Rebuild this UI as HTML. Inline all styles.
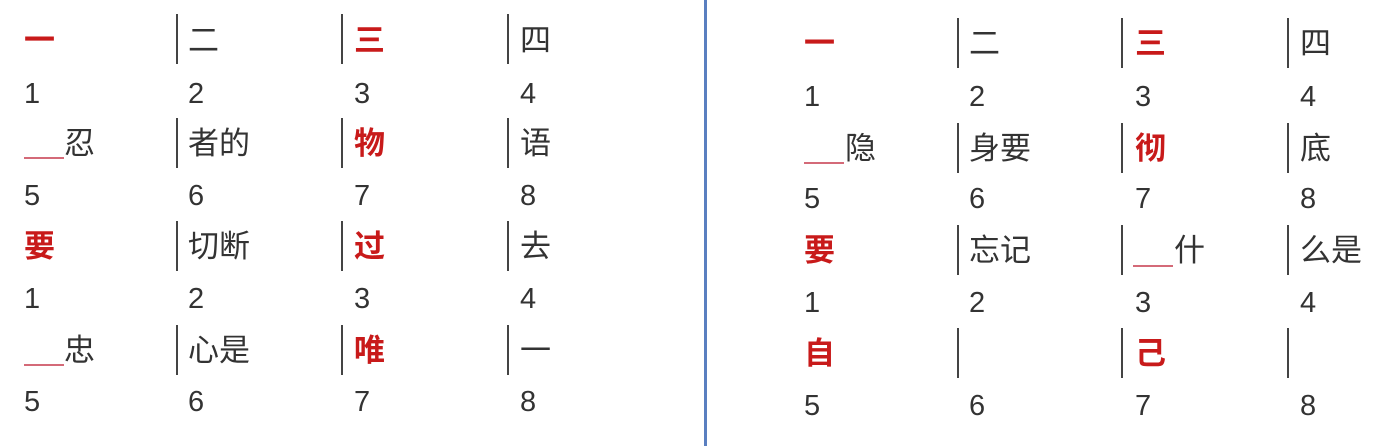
<!DOCTYPE html>
<html><head><meta charset="utf-8"><style>
html,body{margin:0;padding:0;background:#fff;width:1389px;height:446px;overflow:hidden;position:relative}
.c{position:absolute;font-family:"Liberation Sans","Noto Sans CJK SC",sans-serif;font-size:31px;line-height:30px;color:#333;white-space:nowrap}
.r{color:#c81a1a}
.b{font-weight:bold}
.n{position:absolute;font-family:"Liberation Sans",sans-serif;font-size:29px;line-height:30px;color:#333}
.bar{position:absolute;width:2px;height:50px;background:#444}
.u{position:absolute;height:2px;width:40px;background:#d46a78}
#div{position:absolute;left:704px;top:0;width:3px;height:446px;background:#5a7fc0}
</style></head><body>
<div id="div"></div>

<!-- LEFT -->
<div class="c r b" style="left:24px;top:26px">一</div>
<div class="bar" style="left:176px;top:14px"></div><div class="c" style="left:188px;top:26px">二</div>
<div class="bar" style="left:341px;top:14px"></div><div class="c r b" style="left:354px;top:26px">三</div>
<div class="bar" style="left:507px;top:14px"></div><div class="c" style="left:520px;top:26px">四</div>
<div class="n" style="left:24px;top:79px">1</div><div class="n" style="left:188px;top:79px">2</div><div class="n" style="left:354px;top:79px">3</div><div class="n" style="left:520px;top:79px">4</div>

<div class="u" style="left:24px;top:157px"></div><div class="c" style="left:64px;top:129px">忍</div>
<div class="bar" style="left:176px;top:118px"></div><div class="c" style="left:188px;top:129px">者的</div>
<div class="bar" style="left:341px;top:118px"></div><div class="c r b" style="left:354px;top:129px">物</div>
<div class="bar" style="left:507px;top:118px"></div><div class="c" style="left:520px;top:129px">语</div>
<div class="n" style="left:24px;top:181px">5</div><div class="n" style="left:188px;top:181px">6</div><div class="n" style="left:354px;top:181px">7</div><div class="n" style="left:520px;top:181px">8</div>

<div class="c r b" style="left:24px;top:232px">要</div>
<div class="bar" style="left:176px;top:221px"></div><div class="c" style="left:188px;top:232px">切断</div>
<div class="bar" style="left:341px;top:221px"></div><div class="c r b" style="left:354px;top:232px">过</div>
<div class="bar" style="left:507px;top:221px"></div><div class="c" style="left:520px;top:232px">去</div>
<div class="n" style="left:24px;top:284px">1</div><div class="n" style="left:188px;top:284px">2</div><div class="n" style="left:354px;top:284px">3</div><div class="n" style="left:520px;top:284px">4</div>

<div class="u" style="left:24px;top:364px"></div><div class="c" style="left:64px;top:336px">忠</div>
<div class="bar" style="left:176px;top:325px"></div><div class="c" style="left:188px;top:336px">心是</div>
<div class="bar" style="left:341px;top:325px"></div><div class="c r b" style="left:354px;top:336px">唯</div>
<div class="bar" style="left:507px;top:325px"></div><div class="c" style="left:520px;top:336px">一</div>
<div class="n" style="left:24px;top:387px">5</div><div class="n" style="left:188px;top:387px">6</div><div class="n" style="left:354px;top:387px">7</div><div class="n" style="left:520px;top:387px">8</div>

<!-- RIGHT -->
<div class="c r b" style="left:804px;top:29px">一</div>
<div class="bar" style="left:957px;top:18px"></div><div class="c" style="left:969px;top:29px">二</div>
<div class="bar" style="left:1121px;top:18px"></div><div class="c r b" style="left:1135px;top:29px">三</div>
<div class="bar" style="left:1287px;top:18px"></div><div class="c" style="left:1300px;top:29px">四</div>
<div class="n" style="left:804px;top:82px">1</div><div class="n" style="left:969px;top:82px">2</div><div class="n" style="left:1135px;top:82px">3</div><div class="n" style="left:1300px;top:82px">4</div>

<div class="u" style="left:804px;top:162px"></div><div class="c" style="left:845px;top:134px">隐</div>
<div class="bar" style="left:957px;top:123px"></div><div class="c" style="left:969px;top:134px">身要</div>
<div class="bar" style="left:1121px;top:123px"></div><div class="c r b" style="left:1135px;top:134px">彻</div>
<div class="bar" style="left:1287px;top:123px"></div><div class="c" style="left:1300px;top:134px">底</div>
<div class="n" style="left:804px;top:184px">5</div><div class="n" style="left:969px;top:184px">6</div><div class="n" style="left:1135px;top:184px">7</div><div class="n" style="left:1300px;top:184px">8</div>

<div class="c r b" style="left:804px;top:236px">要</div>
<div class="bar" style="left:957px;top:225px"></div><div class="c" style="left:969px;top:236px">忘记</div>
<div class="bar" style="left:1121px;top:225px"></div><div class="u" style="left:1133px;top:265px"></div><div class="c" style="left:1174px;top:236px">什</div>
<div class="bar" style="left:1287px;top:225px"></div><div class="c" style="left:1300px;top:236px">么是</div>
<div class="n" style="left:804px;top:288px">1</div><div class="n" style="left:969px;top:288px">2</div><div class="n" style="left:1135px;top:288px">3</div><div class="n" style="left:1300px;top:288px">4</div>

<div class="c r b" style="left:804px;top:339px">自</div>
<div class="bar" style="left:957px;top:328px"></div>
<div class="bar" style="left:1121px;top:328px"></div><div class="c r b" style="left:1135px;top:339px">己</div>
<div class="bar" style="left:1287px;top:328px"></div>
<div class="n" style="left:804px;top:391px">5</div><div class="n" style="left:969px;top:391px">6</div><div class="n" style="left:1135px;top:391px">7</div><div class="n" style="left:1300px;top:391px">8</div>
</body></html>
